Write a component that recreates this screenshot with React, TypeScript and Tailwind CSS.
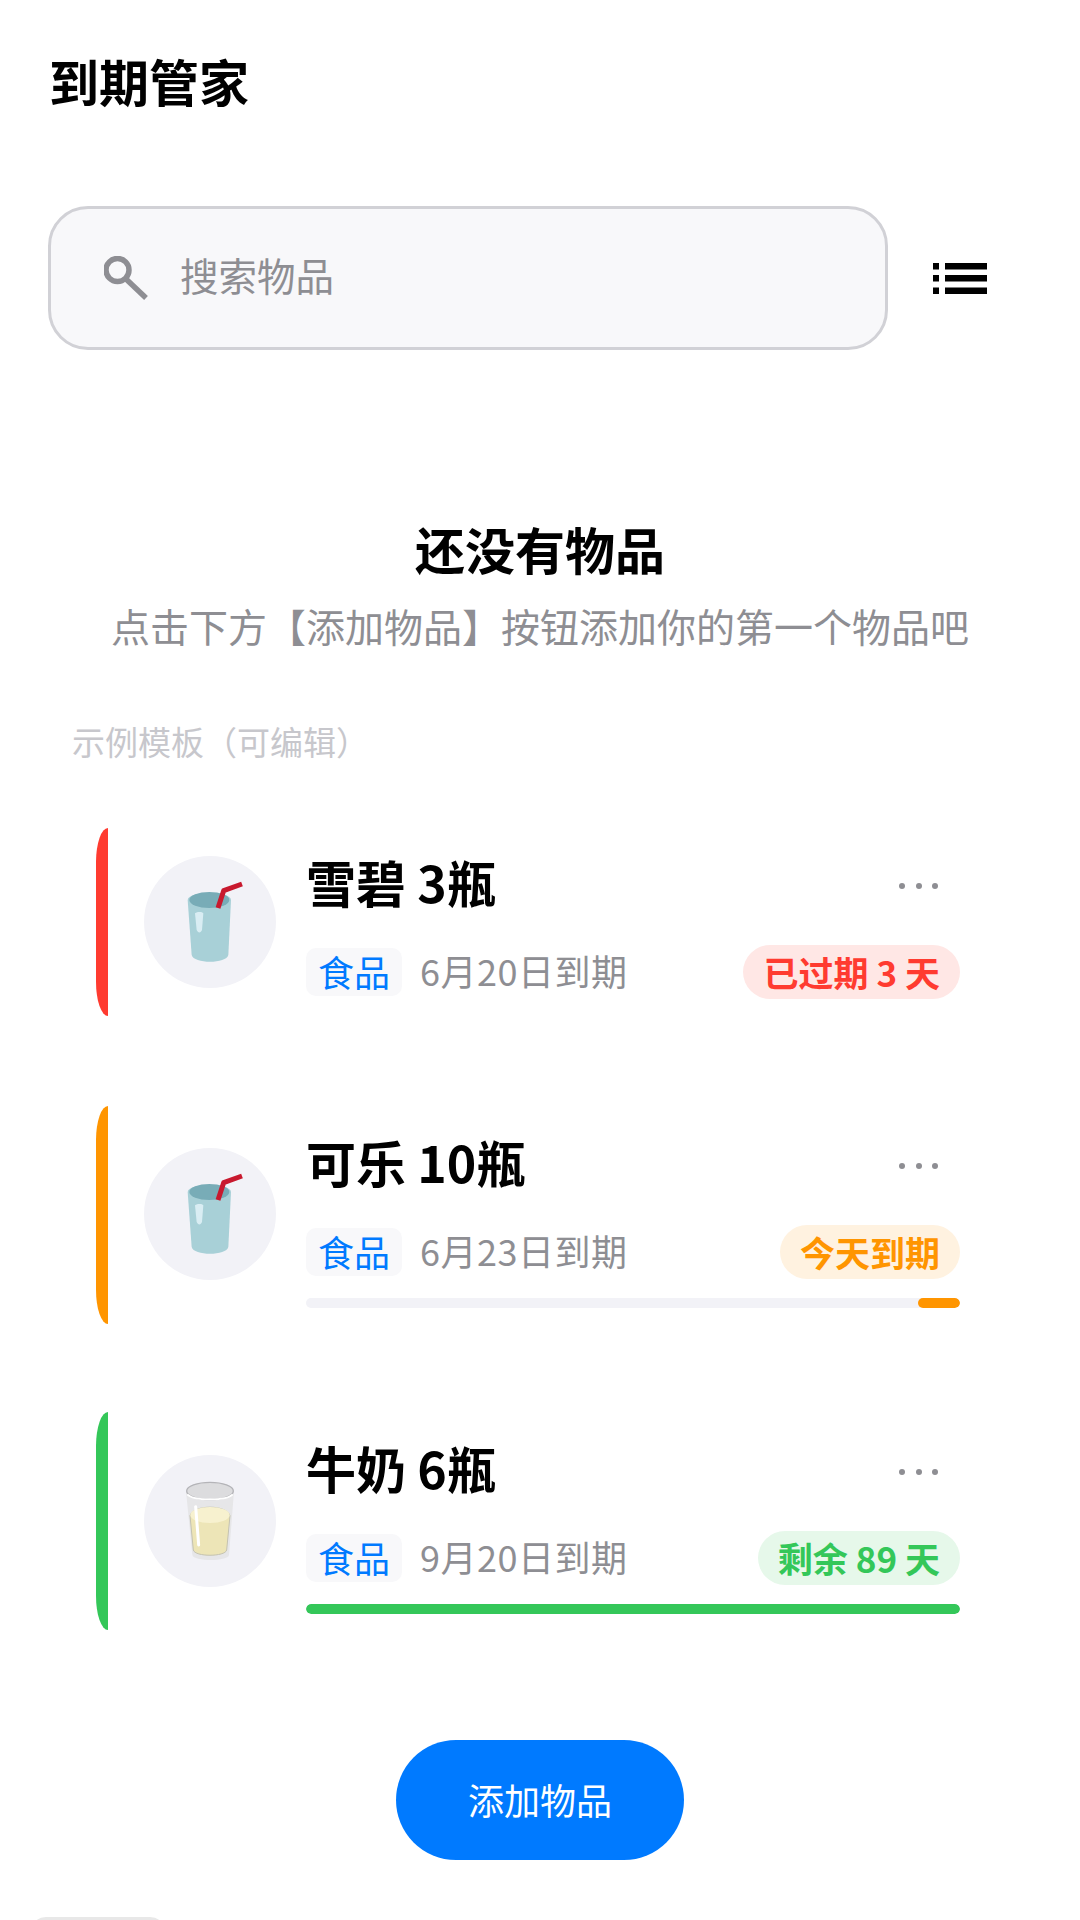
import React from "react";

const FONT = "font-['Noto_Sans_CJK_SC','Noto_Sans',sans-serif]";

function Soda() {
  return (
    <svg viewBox="-48 -72 396 396" className="w-[132px] h-[132px]">
      <path d="M83 60 C84 32 213 32 213 60 L205 225 C200 252 100 252 95 225 Z" fill="#a8d0d7" />
      <ellipse cx="148" cy="60" rx="60" ry="24" fill="#78acb7" />
      <path d="M105 100 C112 95 126 95 130 100 L126 150 C122 160 114 160 110 150 Z" fill="#d9edf3" />
      <path d="M174 84 L191 32 L246 12" fill="none" stroke="#c8192e" strokeWidth="15" strokeLinejoin="round" />
    </svg>
  );
}

function Milk() {
  return (
    <svg viewBox="-48 -30 396 396" className="w-[132px] h-[132px]">
      <path d="M78 78 L97 270 C100 290 204 290 207 270 L222 78 Z" fill="#e6e6e8" />
      <ellipse cx="150" cy="78" rx="70" ry="26" fill="#dcdcde" stroke="#b4b4b8" strokeWidth="4" />
      <path d="M82 88 C100 108 200 108 218 88" fill="none" stroke="#ffffff" strokeWidth="5" />
      <path d="M90 152 L100 255 C104 276 196 276 200 255 L210 152 C200 118 100 118 90 152 Z" fill="#ede5b7" stroke="#c4c2b0" strokeWidth="3" />
      <ellipse cx="150" cy="150" rx="59" ry="24" fill="#f7f1cf" />
      <path d="M107 125 L116 240" fill="none" stroke="#ffffff" strokeWidth="9" strokeLinecap="round" />
    </svg>
  );
}

function Card({
  bar, barH, title, date, badge, badgeText, badgeBg, icon, progress, fill, pt, pb, cpt,
}: {
  bar: string; barH: string; title: string; date: string; badge: string; badgeText: string; badgeBg: string;
  icon: React.ReactNode; progress?: string; fill?: string; pt: string; pb: string; cpt: string;
}) {
  return (
    <div className={`flex items-start ml-[96px] w-[864px] ${pb}`}>
      <div className={`w-[12px] ${barH} ${bar} rounded-l-[12px_34px] shrink-0`} />
      <div className={`ml-[36px] ${pt} shrink-0`}>
        <div className="w-[132px] h-[132px] rounded-full bg-[#f2f2f7] overflow-hidden">{icon}</div>
      </div>
      <div className={`ml-[30px] flex-1 min-w-0 ${cpt}`}>
        <div className="flex items-center justify-between h-[64px]">
          <div className="text-[50px] font-bold text-black leading-[64px]">{title}</div>
          <div className="flex gap-[10.5px] mr-[22px] mt-[10px]">
            <span className="w-[6px] h-[6px] rounded-full bg-[#8e8e93]" />
            <span className="w-[6px] h-[6px] rounded-full bg-[#8e8e93]" />
            <span className="w-[6px] h-[6px] rounded-full bg-[#8e8e93]" />
          </div>
        </div>
        <div className="flex items-center justify-between h-[54px] mt-[32px]">
          <div className="flex items-center">
            <span className="h-[48px] w-[96px] pb-[3px] flex items-center justify-center rounded-[10px] bg-[#f8f8fa] text-[#007aff] text-[36px] leading-none">食品</span>
            <span className="ml-[18px] pb-[4px] text-[#8e8e93] text-[36px] tracking-[0.5px] leading-none">{date}</span>
          </div>
          <span className={`h-[54px] px-[20px] pb-[2px] flex items-center rounded-[27px] text-[35px] font-semibold leading-none ${badgeBg} ${badgeText}`}>{badge}</span>
        </div>
        {progress && (
          <div className="mt-[19px] h-[10px] rounded-full bg-[#f2f2f7] flex justify-end overflow-hidden">
            <div className={`h-full rounded-full ${progress} ${fill}`} />
          </div>
        )}
      </div>
    </div>
  );
}

export default function App() {
  return (
    <div className={`relative w-[1080px] h-[1920px] bg-white overflow-hidden ${FONT}`}>
      <h1 className="pl-[49px] pt-[45px] text-[50px] font-bold leading-[70px] text-black">到期管家</h1>

      <div className="flex items-center mt-[91px] pl-[48px]">
        <div className="w-[840px] h-[144px] rounded-[40px] border-[3px] border-[#d1d1d6] bg-[#f8f8fa] flex items-center pl-[53px]">
          <svg viewBox="0 0 44 44" className="w-[44px] h-[44px]" fill="none" stroke="#8e8e93">
            <circle cx="13.5" cy="14" r="11.5" strokeWidth="5.5" />
            <path d="M22 23 L42 42" strokeWidth="5.5" />
          </svg>
          <span className="ml-[32px] pb-[7px] text-[38.5px] leading-none text-[#8e8e93]">搜索物品</span>
        </div>
        <svg viewBox="0 0 54 31" className="ml-[45px] w-[54px] h-[31px]" fill="#000">
          <rect x="0" y="0" width="6" height="6.5" />
          <rect x="12" y="0" width="42" height="6.5" />
          <rect x="0" y="12" width="6" height="6.5" />
          <rect x="12" y="12" width="42" height="6.5" />
          <rect x="0" y="24.5" width="6" height="6.5" />
          <rect x="12" y="24.5" width="42" height="6.5" />
        </svg>
      </div>

      <div className="mt-[163px] text-center text-[50px] font-bold leading-[70px] text-black">还没有物品</div>
      <div className="mt-[14px] text-center text-[39px] leading-[56px] text-[#8e8e93]">点击下方【添加物品】按钮添加你的第一个物品吧</div>
      <div className="mt-[65px] pl-[72px] text-[33px] leading-[46px] text-[#c7c7cc]">示例模板（可编辑）</div>

      <div className="mt-[64px]">
        <Card bar="bg-[#ff3b30]" barH="h-[188px]" pt="pt-[28px]" cpt="pt-[21px]" pb="pb-[90px]" title="雪碧 3瓶" date="6月20日到期" badge="已过期 3 天" badgeText="text-[#ff3b30]" badgeBg="bg-[#ffe7e5]" icon={<Soda />} />
        <Card bar="bg-[#ff9500]" barH="h-[218px]" pt="pt-[42px]" cpt="pt-[23px]" pb="pb-[88px]" title="可乐 10瓶" date="6月23日到期" badge="今天到期" badgeText="text-[#ff9500]" badgeBg="bg-[#fff2e0]" icon={<Soda />} progress="w-[42px]" fill="bg-[#ff9500]" />
        <Card bar="bg-[#34c759]" barH="h-[218px]" pt="pt-[43px]" cpt="pt-[23px]" pb="pb-[110px]" title="牛奶 6瓶" date="9月20日到期" badge="剩余 89 天" badgeText="text-[#34c759]" badgeBg="bg-[#e6f8ea]" icon={<Milk />} progress="w-full" fill="bg-[#34c759]" />
      </div>

      <div className="flex justify-center">
        <button className="w-[288px] h-[120px] rounded-[60px] bg-[#007aff] text-white text-[36px] leading-none pb-[2px]">添加物品</button>
      </div>

      <div className="absolute left-[30px] top-[1917px] w-[136px] h-[20px] rounded-t-[16px] bg-[#e8e8e8]" />
    </div>
  );
}
